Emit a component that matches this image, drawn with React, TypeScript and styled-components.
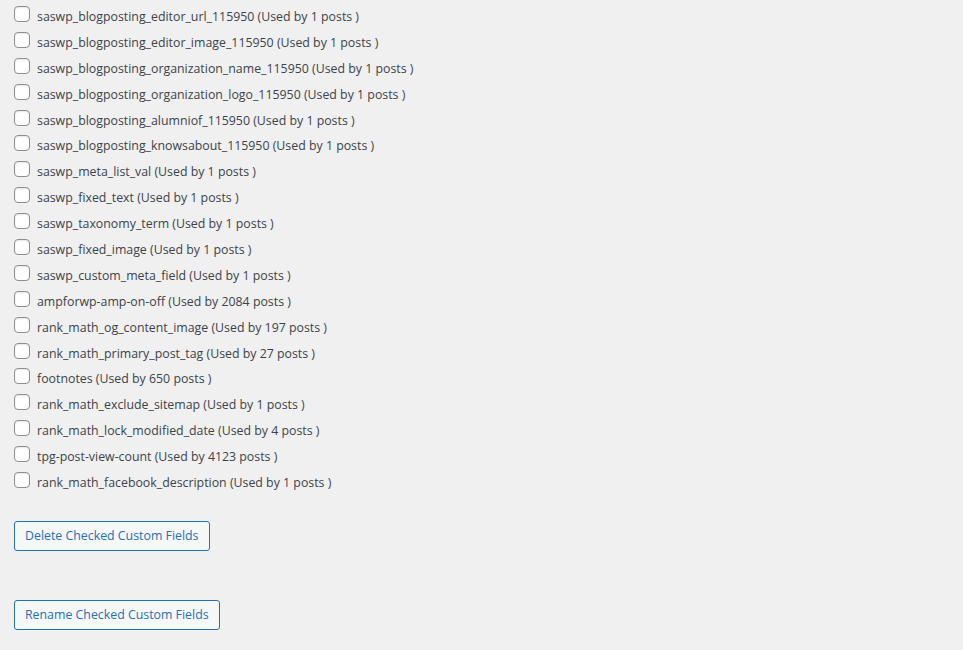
import React from "react";
import styled, { createGlobalStyle } from "styled-components";

const Global = createGlobalStyle`
  html, body { margin: 0; padding: 0; background: #f0f0f1; }
  body { font-family: "Open Sans", "Noto Sans", sans-serif; color: #3c434a; font-size: 13px; }
`;

const Page = styled.div`
  padding: 4px 14px 0;
  display: flex;
  flex-direction: column;
`;

const List = styled.div`
  display: flex;
  flex-direction: column;
`;

const Row = styled.label`
  display: flex;
  align-items: flex-start;
  height: 25.9px;
  cursor: pointer;
`;

const Box = styled.span`
  box-sizing: border-box;
  width: 16px;
  height: 16px;
  margin-top: 2px;
  flex: none;
  border: 1px solid #8c8f94;
  border-radius: 4px;
  background: #fff;
  box-shadow: inset 0 1px 2px rgba(0, 0, 0, 0.1);
`;

const Text = styled.span`
  margin-left: 7px;
  font-size: 12.35px;
  line-height: 20px;
  margin-top: 3px;
  white-space: nowrap;
`;

const Button = styled.button<{ $top: number }>`
  align-self: flex-start;
  margin-top: ${(p) => p.$top}px;
  box-sizing: border-box;
  height: 30px;
  padding: 0 10px;
  font-family: "Open Sans", "Noto Sans", sans-serif;
  font-size: 12.35px;
  color: #2271b1;
  background: #f6f7f7;
  border: 1px solid #2271b1;
  border-radius: 3px;
  cursor: pointer;
`;

const fields: [string, number][] = [
  ["saswp_blogposting_editor_url_115950", 1],
  ["saswp_blogposting_editor_image_115950", 1],
  ["saswp_blogposting_organization_name_115950", 1],
  ["saswp_blogposting_organization_logo_115950", 1],
  ["saswp_blogposting_alumniof_115950", 1],
  ["saswp_blogposting_knowsabout_115950", 1],
  ["saswp_meta_list_val", 1],
  ["saswp_fixed_text", 1],
  ["saswp_taxonomy_term", 1],
  ["saswp_fixed_image", 1],
  ["saswp_custom_meta_field", 1],
  ["ampforwp-amp-on-off", 2084],
  ["rank_math_og_content_image", 197],
  ["rank_math_primary_post_tag", 27],
  ["footnotes", 650],
  ["rank_math_exclude_sitemap", 1],
  ["rank_math_lock_modified_date", 4],
  ["tpg-post-view-count", 4123],
  ["rank_math_facebook_description", 1],
];

export default function App() {
  return (
    <>
      <Global />
      <Page>
        <List>
          {fields.map(([name, n]) => (
            <Row key={name}>
              <Box />
              <Text>
                {name} (Used by {n} posts )
              </Text>
            </Row>
          ))}
        </List>
        <Button $top={25}>Delete Checked Custom Fields</Button>
        <Button $top={49}>Rename Checked Custom Fields</Button>
      </Page>
    </>
  );
}
